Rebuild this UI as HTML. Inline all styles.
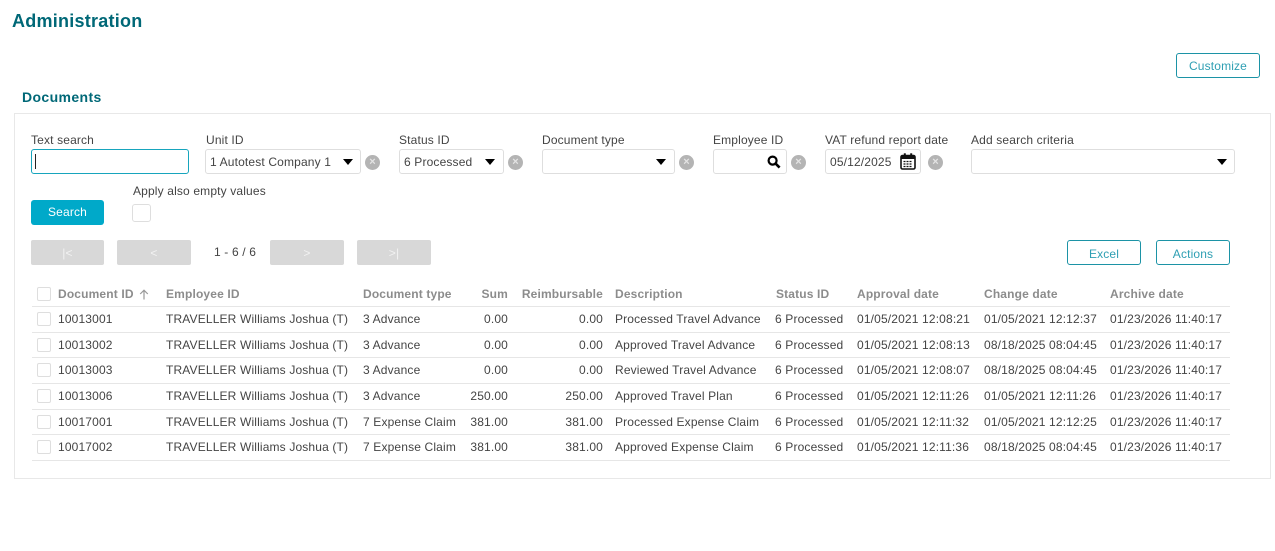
<!DOCTYPE html>
<html><head><meta charset="utf-8"><title>Administration</title>
<style>
html,body{margin:0;padding:0;background:#fff;}
body{width:1275px;height:551px;position:relative;overflow:hidden;font-family:"Liberation Sans",sans-serif;font-size:12px;color:#444;letter-spacing:.15px;}
.a,.t,.th,.r,.b,.i,.cb,.x,.l{position:absolute;box-sizing:border-box;}
.t,.th,.r,.l{white-space:nowrap;line-height:14px;}
.th{font-weight:bold;color:#8c8c8c;letter-spacing:.15px;}
.r{text-align:right;}
.l{left:32px;width:1198px;height:1px;background:#e6e6e6;}
.i{background:#fff;border:1px solid #dedede;border-radius:3px;height:25px;top:149px;}
.cb{width:14px;height:14px;left:37px;border:1px solid #dedede;border-radius:2px;background:#fff;}
.x{width:15px;height:15px;top:155px;border-radius:50%;background:#b4b4b4;color:#e4e4e4;text-align:center;font-size:11px;line-height:15px;font-weight:bold;letter-spacing:0;}
.b{top:240px;height:25px;background:#d8d8d8;border-radius:2px;color:#f2f2f2;text-align:center;line-height:26px;}
.o{border:1px solid #1c93a6;border-radius:3px;background:#fff;color:#2e9fb3;text-align:center;}
.c{position:absolute;width:0;height:0;border-left:5px solid transparent;border-right:5px solid transparent;border-top:6px solid #000;top:159px;}
</style></head><body>
<div class="t" style="left:12px;top:10px;font-size:18px;line-height:22px;font-weight:bold;color:#006877;letter-spacing:.25px;">Administration</div>
<div class="b o" style="left:1176px;top:53px;width:84px;height:25px;line-height:24px;">Customize</div>
<div class="t" style="left:22px;top:88px;font-size:14px;line-height:18px;font-weight:bold;color:#006877;letter-spacing:.38px;">Documents</div>
<div class="a" style="left:14px;top:113px;width:1257px;height:366px;border:1px solid #e8e8e8;"></div>

<div class="t" style="left:31px;top:133px;">Text search</div>
<div class="t" style="left:206px;top:133px;">Unit ID</div>
<div class="t" style="left:399px;top:133px;">Status ID</div>
<div class="t" style="left:542px;top:133px;">Document type</div>
<div class="t" style="left:713px;top:133px;">Employee ID</div>
<div class="t" style="left:825px;top:133px;">VAT refund report date</div>
<div class="t" style="left:971px;top:133px;">Add search criteria</div>

<div class="i" style="left:31px;width:158px;border-color:#17a5bd;"></div>
<div class="a" style="left:35px;top:154px;width:1px;height:15px;background:#222;"></div>
<div class="i" style="left:205px;width:156px;"></div>
<div class="t" style="left:210px;top:155px;">1 Autotest Company 1</div><div class="c" style="left:343px;"></div>
<div class="x" style="left:365px;">×</div>
<div class="i" style="left:399px;width:105px;"></div>
<div class="t" style="left:404px;top:155px;">6 Processed</div><div class="c" style="left:485px;"></div>
<div class="x" style="left:508px;">×</div>
<div class="i" style="left:542px;width:133px;"></div><div class="c" style="left:656px;"></div>
<div class="x" style="left:679px;">×</div>
<div class="i" style="left:713px;width:74px;"></div>
<svg class="a" style="left:767px;top:155px;" width="14" height="14" viewBox="0 0 14 14"><circle cx="5.6" cy="5.6" r="4" fill="none" stroke="#000" stroke-width="2.2"/><path d="M8.7 8.7L12.6 12.6" stroke="#000" stroke-width="2.6"/></svg>
<div class="x" style="left:791px;">×</div>
<div class="i" style="left:825px;width:96px;"></div>
<div class="t" style="left:830px;top:155px;">05/12/2025</div>
<svg class="a" style="left:900px;top:153px;" width="16" height="17" viewBox="0 0 16 17"><rect x="1" y="2.5" width="14" height="13.5" rx="1.5" fill="none" stroke="#111" stroke-width="1.6"/><rect x="1" y="2.5" width="14" height="3.5" fill="#111"/><rect x="3.8" y="0.3" width="2" height="3.6" fill="#111"/><rect x="10.2" y="0.3" width="2" height="3.6" fill="#111"/><path d="M3.5 8.5h9M3.5 11h9M3.5 13.5h9" stroke="#111" stroke-width="1.3" stroke-dasharray="2 1"/></svg>
<div class="x" style="left:928px;">×</div>
<div class="i" style="left:971px;width:264px;"></div><div class="c" style="left:1217px;"></div>

<div class="a" style="left:31px;top:200px;width:73px;height:25px;background:#00a9c9;border-radius:3px;color:#fff;text-align:center;line-height:24px;">Search</div>
<div class="t" style="left:133px;top:184px;">Apply also empty values</div>
<div class="a" style="left:132px;top:204px;width:19px;height:18px;border:1px solid #dedede;border-radius:3px;"></div>

<div class="b" style="left:31px;width:73px;">|&lt;</div>
<div class="b" style="left:117px;width:74px;">&lt;</div>
<div class="t" style="left:214px;top:245px;">1 - 6 / 6</div>
<div class="b" style="left:270px;width:74px;">&gt;</div>
<div class="b" style="left:357px;width:74px;">&gt;|</div>
<div class="b o" style="left:1067px;width:74px;line-height:26px;">Excel</div>
<div class="b o" style="left:1156px;width:74px;line-height:26px;">Actions</div>

<div class="cb" style="top:287px;"></div>
<div class="th" style="left:58px;top:287px;">Document ID</div>
<svg class="a" style="left:139px;top:289px;" width="10" height="11" viewBox="0 0 10 11"><path d="M5 10.5V1.5M1.2 5L5 1.2 8.8 5" fill="none" stroke="#999" stroke-width="1.2"/></svg>
<div class="th" style="left:166px;top:287px;">Employee ID</div>
<div class="th" style="left:363px;top:287px;">Document type</div>
<div class="th r" style="right:767px;top:287px;">Sum</div>
<div class="th r" style="right:672px;top:287px;">Reimbursable</div>
<div class="th" style="left:615px;top:287px;">Description</div>
<div class="th" style="left:776px;top:287px;">Status ID</div>
<div class="th" style="left:857px;top:287px;">Approval date</div>
<div class="th" style="left:984px;top:287px;">Change date</div>
<div class="th" style="left:1110px;top:287px;">Archive date</div>

<div class="l" style="top:306px;"></div>
<div class="l" style="top:332px;"></div>
<div class="l" style="top:357px;"></div>
<div class="l" style="top:383px;"></div>
<div class="l" style="top:409px;"></div>
<div class="l" style="top:434px;"></div>
<div class="l" style="top:460px;"></div>

<div class="cb" style="top:312px;"></div>
<div class="t" style="left:58px;top:312px;">10013001</div>
<div class="t" style="left:166px;top:312px;">TRAVELLER Williams Joshua (T)</div>
<div class="t" style="left:363px;top:312px;">3 Advance</div>
<div class="r" style="right:767px;top:312px;">0.00</div>
<div class="r" style="right:672px;top:312px;">0.00</div>
<div class="t" style="left:615px;top:312px;">Processed Travel Advance</div>
<div class="t" style="left:775px;top:312px;">6 Processed</div>
<div class="t" style="left:857px;top:312px;">01/05/2021 12:08:21</div>
<div class="t" style="left:984px;top:312px;">01/05/2021 12:12:37</div>
<div class="t" style="left:1110px;top:312px;">01/23/2026 11:40:17</div>

<div class="cb" style="top:338px;"></div>
<div class="t" style="left:58px;top:338px;">10013002</div>
<div class="t" style="left:166px;top:338px;">TRAVELLER Williams Joshua (T)</div>
<div class="t" style="left:363px;top:338px;">3 Advance</div>
<div class="r" style="right:767px;top:338px;">0.00</div>
<div class="r" style="right:672px;top:338px;">0.00</div>
<div class="t" style="left:615px;top:338px;">Approved Travel Advance</div>
<div class="t" style="left:775px;top:338px;">6 Processed</div>
<div class="t" style="left:857px;top:338px;">01/05/2021 12:08:13</div>
<div class="t" style="left:984px;top:338px;">08/18/2025 08:04:45</div>
<div class="t" style="left:1110px;top:338px;">01/23/2026 11:40:17</div>

<div class="cb" style="top:363px;"></div>
<div class="t" style="left:58px;top:363px;">10013003</div>
<div class="t" style="left:166px;top:363px;">TRAVELLER Williams Joshua (T)</div>
<div class="t" style="left:363px;top:363px;">3 Advance</div>
<div class="r" style="right:767px;top:363px;">0.00</div>
<div class="r" style="right:672px;top:363px;">0.00</div>
<div class="t" style="left:615px;top:363px;">Reviewed Travel Advance</div>
<div class="t" style="left:775px;top:363px;">6 Processed</div>
<div class="t" style="left:857px;top:363px;">01/05/2021 12:08:07</div>
<div class="t" style="left:984px;top:363px;">08/18/2025 08:04:45</div>
<div class="t" style="left:1110px;top:363px;">01/23/2026 11:40:17</div>

<div class="cb" style="top:389px;"></div>
<div class="t" style="left:58px;top:389px;">10013006</div>
<div class="t" style="left:166px;top:389px;">TRAVELLER Williams Joshua (T)</div>
<div class="t" style="left:363px;top:389px;">3 Advance</div>
<div class="r" style="right:767px;top:389px;">250.00</div>
<div class="r" style="right:672px;top:389px;">250.00</div>
<div class="t" style="left:615px;top:389px;">Approved Travel Plan</div>
<div class="t" style="left:775px;top:389px;">6 Processed</div>
<div class="t" style="left:857px;top:389px;">01/05/2021 12:11:26</div>
<div class="t" style="left:984px;top:389px;">01/05/2021 12:11:26</div>
<div class="t" style="left:1110px;top:389px;">01/23/2026 11:40:17</div>

<div class="cb" style="top:415px;"></div>
<div class="t" style="left:58px;top:415px;">10017001</div>
<div class="t" style="left:166px;top:415px;">TRAVELLER Williams Joshua (T)</div>
<div class="t" style="left:363px;top:415px;">7 Expense Claim</div>
<div class="r" style="right:767px;top:415px;">381.00</div>
<div class="r" style="right:672px;top:415px;">381.00</div>
<div class="t" style="left:615px;top:415px;">Processed Expense Claim</div>
<div class="t" style="left:775px;top:415px;">6 Processed</div>
<div class="t" style="left:857px;top:415px;">01/05/2021 12:11:32</div>
<div class="t" style="left:984px;top:415px;">01/05/2021 12:12:25</div>
<div class="t" style="left:1110px;top:415px;">01/23/2026 11:40:17</div>

<div class="cb" style="top:440px;"></div>
<div class="t" style="left:58px;top:440px;">10017002</div>
<div class="t" style="left:166px;top:440px;">TRAVELLER Williams Joshua (T)</div>
<div class="t" style="left:363px;top:440px;">7 Expense Claim</div>
<div class="r" style="right:767px;top:440px;">381.00</div>
<div class="r" style="right:672px;top:440px;">381.00</div>
<div class="t" style="left:615px;top:440px;">Approved Expense Claim</div>
<div class="t" style="left:775px;top:440px;">6 Processed</div>
<div class="t" style="left:857px;top:440px;">01/05/2021 12:11:36</div>
<div class="t" style="left:984px;top:440px;">08/18/2025 08:04:45</div>
<div class="t" style="left:1110px;top:440px;">01/23/2026 11:40:17</div>
</body></html>
